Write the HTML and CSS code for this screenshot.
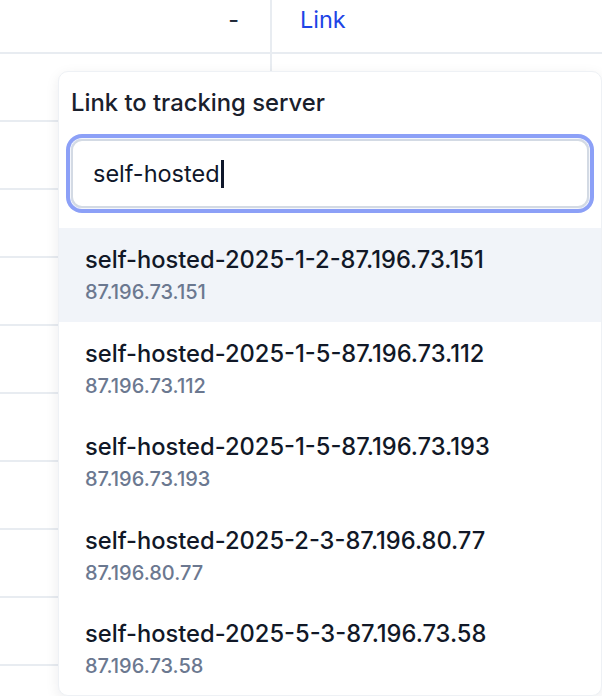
FILE: index.html
```html
<!DOCTYPE html>
<html lang="en">
<head>
  <meta charset="UTF-8" />
  <meta name="viewport" content="width=device-width, initial-scale=1.0">
  <title>Servers</title>
  <link rel="stylesheet" href="styles.css">
</head>
<body>
  <div class="page">
    <table class="servers">
      <colgroup>
        <col class="col-num">
        <col>
      </colgroup>
      <tbody>
        <tr><td class="num">-</td><td class="action"><a href="#">Link</a></td></tr>
        <tr><td></td><td></td></tr>
        <tr><td></td><td></td></tr>
        <tr><td></td><td></td></tr>
        <tr><td></td><td></td></tr>
        <tr><td></td><td></td></tr>
        <tr><td></td><td></td></tr>
        <tr><td></td><td></td></tr>
        <tr><td></td><td></td></tr>
        <tr><td></td><td></td></tr>
        <tr><td></td><td></td></tr>
      </tbody>
    </table>

    <!-- link popover -->
    <div class="popover">
      <div class="popover-head">
        <div class="popover-title">Link to tracking server</div>
        <div class="search" role="textbox">
          <span>self-hosted</span><span class="caret"></span>
        </div>
      </div>
      <ul class="options">
        <li class="option active">
          <div class="option-name">self-hosted-2025-1-2-87.196.73.151</div>
          <div class="option-ip">87.196.73.151</div>
        </li>
        <li class="option">
          <div class="option-name">self-hosted-2025-1-5-87.196.73.112</div>
          <div class="option-ip">87.196.73.112</div>
        </li>
        <li class="option">
          <div class="option-name">self-hosted-2025-1-5-87.196.73.193</div>
          <div class="option-ip">87.196.73.193</div>
        </li>
        <li class="option">
          <div class="option-name">self-hosted-2025-2-3-87.196.80.77</div>
          <div class="option-ip">87.196.80.77</div>
        </li>
        <li class="option">
          <div class="option-name">self-hosted-2025-5-3-87.196.73.58</div>
          <div class="option-ip">87.196.73.58</div>
        </li>
      </ul>
    </div>
  </div>
</body>
</html>
```

FILE: styles.css
```css
body {
  margin: 0;
  font-family: Inter, "Noto Sans", sans-serif;
  background: white;
  color: #111827;
  overflow: hidden;
}
.page {
  position: relative;
  height: 696px;
  overflow: hidden;
}
.servers {
  width: 100%;
  table-layout: fixed;
  border-collapse: collapse;
  margin-top: -14px;
  font-size: 23.5px;
}
.col-num {
  width: 271px;
}
.servers td {
  height: 66px;
  padding: 0;
  border-bottom: 2px solid #e8ecf1;
}
.servers td:first-child {
  border-right: 2px solid #e8ecf1;
}
.num {
  text-align: right;
  padding-right: 31px !important;
  color: #1f2937;
}
.action {
  padding-left: 28px !important;
}
.action a {
  color: #1d44e6;
  text-decoration: none;
}
.popover {
  position: absolute;
  left: 58px;
  top: 71px;
  width: 542px;
  height: 623px;
  background: white;
  border: 1px solid #eef1f5;
  border-radius: 10px;
  box-shadow: 0 4px 14px rgba(15, 23, 42, 0.08);
  overflow: hidden;
}
.popover-head {
  padding: 17px 12px 20px 12px;
}
.popover-title {
  font-size: 23.8px;
  font-weight: 500;
  line-height: 28px;
  color: #1a202c;
  margin-bottom: 22px;
}
.search {
  display: flex;
  align-items: center;
  height: 65px;
  padding: 0 20px;
  border: 2px solid #d3dae4;
  border-radius: 11px;
  box-shadow: 0 0 0 1px #f4f6fb, 0 0 0 5px #8ca0f7;
  font-size: 23.5px;
  color: #0f172a;
}
.caret {
  display: inline-block;
  width: 3px;
  height: 28px;
  background: #0f172a;
  margin-left: 1px;
}
.options {
  list-style: none;
  margin: 0;
  padding: 0;
}
.option {
  padding: 17px 26px 16.5px 26px;
}
.option.active {
  background: #f1f4f9;
}
.option-name {
  font-size: 23.7px;
  font-weight: 500;
  line-height: 30px;
  color: #111827;
}
.option-ip {
  font-size: 20px;
  font-weight: 500;
  line-height: 26px;
  margin-top: 4px;
  color: #6b7890;
}
```
